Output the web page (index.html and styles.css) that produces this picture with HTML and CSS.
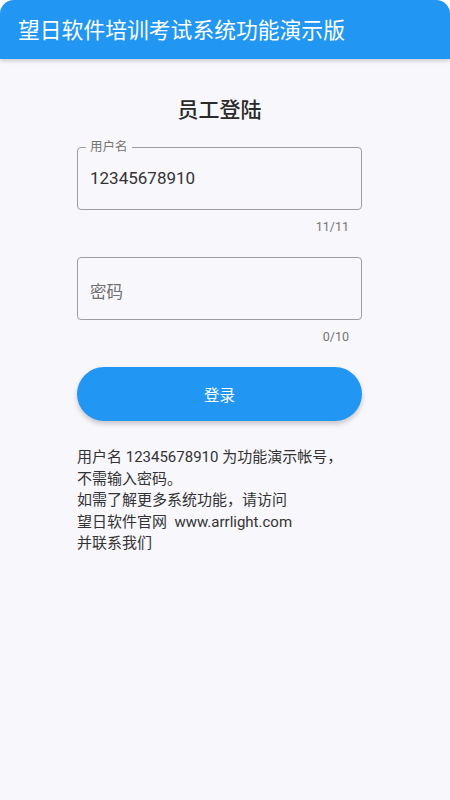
FILE: index.html
```html
<!DOCTYPE html>
<html lang="zh-CN">
<head>
<meta charset="utf-8">
<title>员工登陆</title>
<link rel="stylesheet" href="styles.css">
</head>
<body>
<div class="app">
  <header class="appbar">
    <h1 class="appbar-title">望日软件培训考试系统功能演示版</h1>
  </header>
  <main class="content">
    <h2 class="page-title">员工登陆</h2>
    <div class="field filled">
      <span class="field-label">用户名</span>
      <span class="field-value">12345678910</span>
    </div>
    <div class="counter">11/11</div>
    <div class="field field-gap">
      <span class="field-placeholder">密码</span>
    </div>
    <div class="counter">0/10</div>
    <button class="login-btn" type="button">登录</button>
    <p class="info">用户名 12345678910 为功能演示帐号，<br>不需输入密码。<br>如需了解更多系统功能，请访问<br>望日软件官网&nbsp; www.arrlight.com<br>并联系我们</p>
  </main>
</div>
</body>
</html>
```
FILE: styles.css
```css
html, body {
  margin: 0;
  padding: 0;
  background: #ffffff;
}
body {
  font-family: Roboto, "Noto Sans CJK SC", sans-serif;
  width: 450px;
  height: 800px;
  overflow: hidden;
}
.app {
  height: 800px;
  background: #f8f7fc;
  border-radius: 14px 14px 0 0;
  overflow: hidden;
}
.appbar {
  height: 59px;
  background: #2196f3;
  display: flex;
  align-items: center;
  padding: 3px 0 0 18px;
  box-sizing: border-box;
  box-shadow: 0 2px 4px rgba(0, 0, 0, 0.18);
  position: relative;
  z-index: 1;
}
.appbar-title {
  margin: 0;
  font-size: 21.8px;
  font-weight: 400;
  color: #ffffff;
  line-height: 28px;
  letter-spacing: 0;
}
.content {
  margin-left: 77px;
  width: 285px;
  display: flex;
  flex-direction: column;
}
.page-title {
  margin: 36px 0 0 0;
  text-align: center;
  font-size: 21px;
  font-weight: 500;
  color: #2a2a2a;
  line-height: 30px;
}
.field {
  margin-top: 22px;
  height: 63px;
  box-sizing: border-box;
  border: 1.3px solid #9e9e9e;
  border-radius: 4px;
  position: relative;
  display: flex;
  align-items: center;
  padding: 0 12px;
}
.field-gap {
  margin-top: 22px;
}
.field-label {
  position: absolute;
  top: -9px;
  left: 8px;
  padding: 0 4px;
  background: #f8f7fc;
  font-size: 12.5px;
  line-height: 16px;
  color: #757575;
}
.field-value {
  font-size: 17px;
  color: #333333;
  margin-top: -1px;
}
.field-placeholder {
  font-size: 16.5px;
  color: #6f6f6f;
  margin-top: 5px;
}
.counter {
  margin-top: 9px;
  align-self: flex-end;
  margin-right: 13px;
  font-size: 12.5px;
  line-height: 16px;
  color: #757575;
}
.login-btn {
  margin-top: 22px;
  height: 54px;
  border: none;
  border-radius: 27px;
  background: #2196f3;
  color: #ffffff;
  font-family: Roboto, "Noto Sans CJK SC", sans-serif;
  font-size: 15.5px;
  box-shadow: 0 3px 5px rgba(0, 0, 0, 0.2);
  padding: 0;
}
.info {
  margin: 26px 0 0 0;
  font-size: 15px;
  line-height: 21.6px;
  color: #333333;
  white-space: nowrap;
}
```
